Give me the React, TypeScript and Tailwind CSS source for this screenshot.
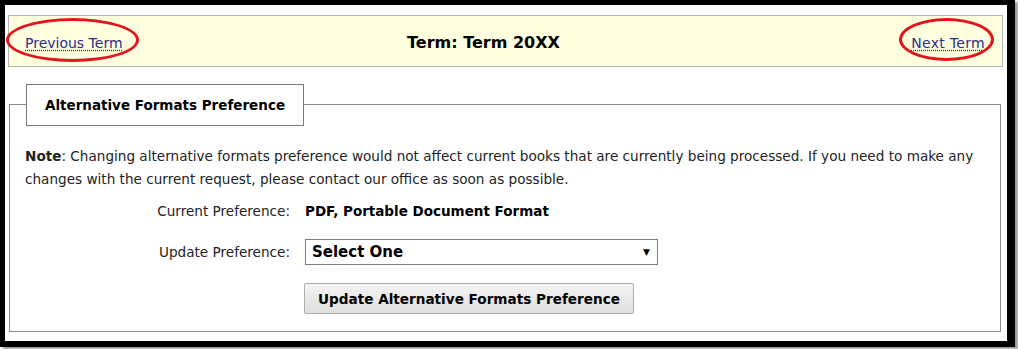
export default function App() {
  const font = { fontFamily: '"DejaVu Sans", Verdana, sans-serif' }
  return (
    <div className="w-[1018px] h-[349px] bg-white" style={font}>
      <div className="w-[1015px] h-[347px] border-black border-t-[5px] border-l-[5px] border-r-[8px] border-b-[6px] shadow-[3px_2px_2px_#9a9a9a] bg-white flex flex-col">
        {/* term switcher */}
        <div className="mt-[10px] ml-[3px] mr-[4px] h-[52px] border border-[#b4b4b4] bg-[#ffffdf] flex items-center pt-[4px] pl-[16px] pr-[17px] text-[14px]">
          <div className="w-[382px]">
            <div className="relative inline-block">
              <a href="#" className="text-[#2b2b8c] underline decoration-dotted underline-offset-2">Previous Term</a>
              <span className="absolute -left-[19px] -top-[15px] w-[133px] h-[44px] rounded-[50%] border-[3px] border-[#e4141b]" />
            </div>
          </div>
          <span className="text-[16px] font-bold text-black">Term: Term 20XX</span>
          <div className="flex-1 flex justify-end">
            <div className="relative inline-block">
              <a href="#" className="text-[#2b2b8c] underline decoration-dotted underline-offset-2 tracking-[0.3px]">Next Term</a>
              <span className="absolute -left-[12px] -top-[15px] w-[95px] h-[43px] rounded-[50%] border-[3px] border-[#e4141b]" />
            </div>
          </div>
        </div>

        {/* fieldset */}
        <div className="relative mt-[37px] ml-[4px] mr-[6px] h-[228px] border border-[#8c8c8c] text-[13.6px] text-[#222]">
          <div className="absolute left-[16px] -top-[21px] w-[278px] h-[42px] border border-[#7a7a7a] bg-white flex items-center justify-center text-[13.5px] font-bold text-black">
            Alternative Formats Preference
          </div>
          <p className="pt-[40px] px-[15px] leading-[23px]">
            <b>Note</b>: Changing alternative formats preference would not affect current books that are currently being processed. If you need to make any changes with the current request, please contact our office as soon as possible.
          </p>
          <div className="mt-[10px] grid grid-cols-[280px_1fr] gap-x-[15px] gap-y-[18px] items-center">
            <span className="text-right">Current Preference:</span>
            <span className="font-bold text-black text-[13.5px]">PDF, Portable Document Format</span>
            <span className="text-right">Update Preference:</span>
            <div className="w-[353px] h-[26px] border border-[#7d7d7d] flex items-center justify-between pl-[6px] pr-[7px] text-[15px] font-bold text-black">
              <span>Select One</span>
              <span className="text-[9px]">▼</span>
            </div>
            <span />
            <button className="-ml-[1px] w-[330px] h-[31px] border border-[#adadad] rounded-[2px] bg-gradient-to-b from-[#f4f4f4] to-[#dedede] text-[13.6px] font-bold text-black">
              Update Alternative Formats Preference
            </button>
          </div>
        </div>
      </div>
    </div>
  )
}
